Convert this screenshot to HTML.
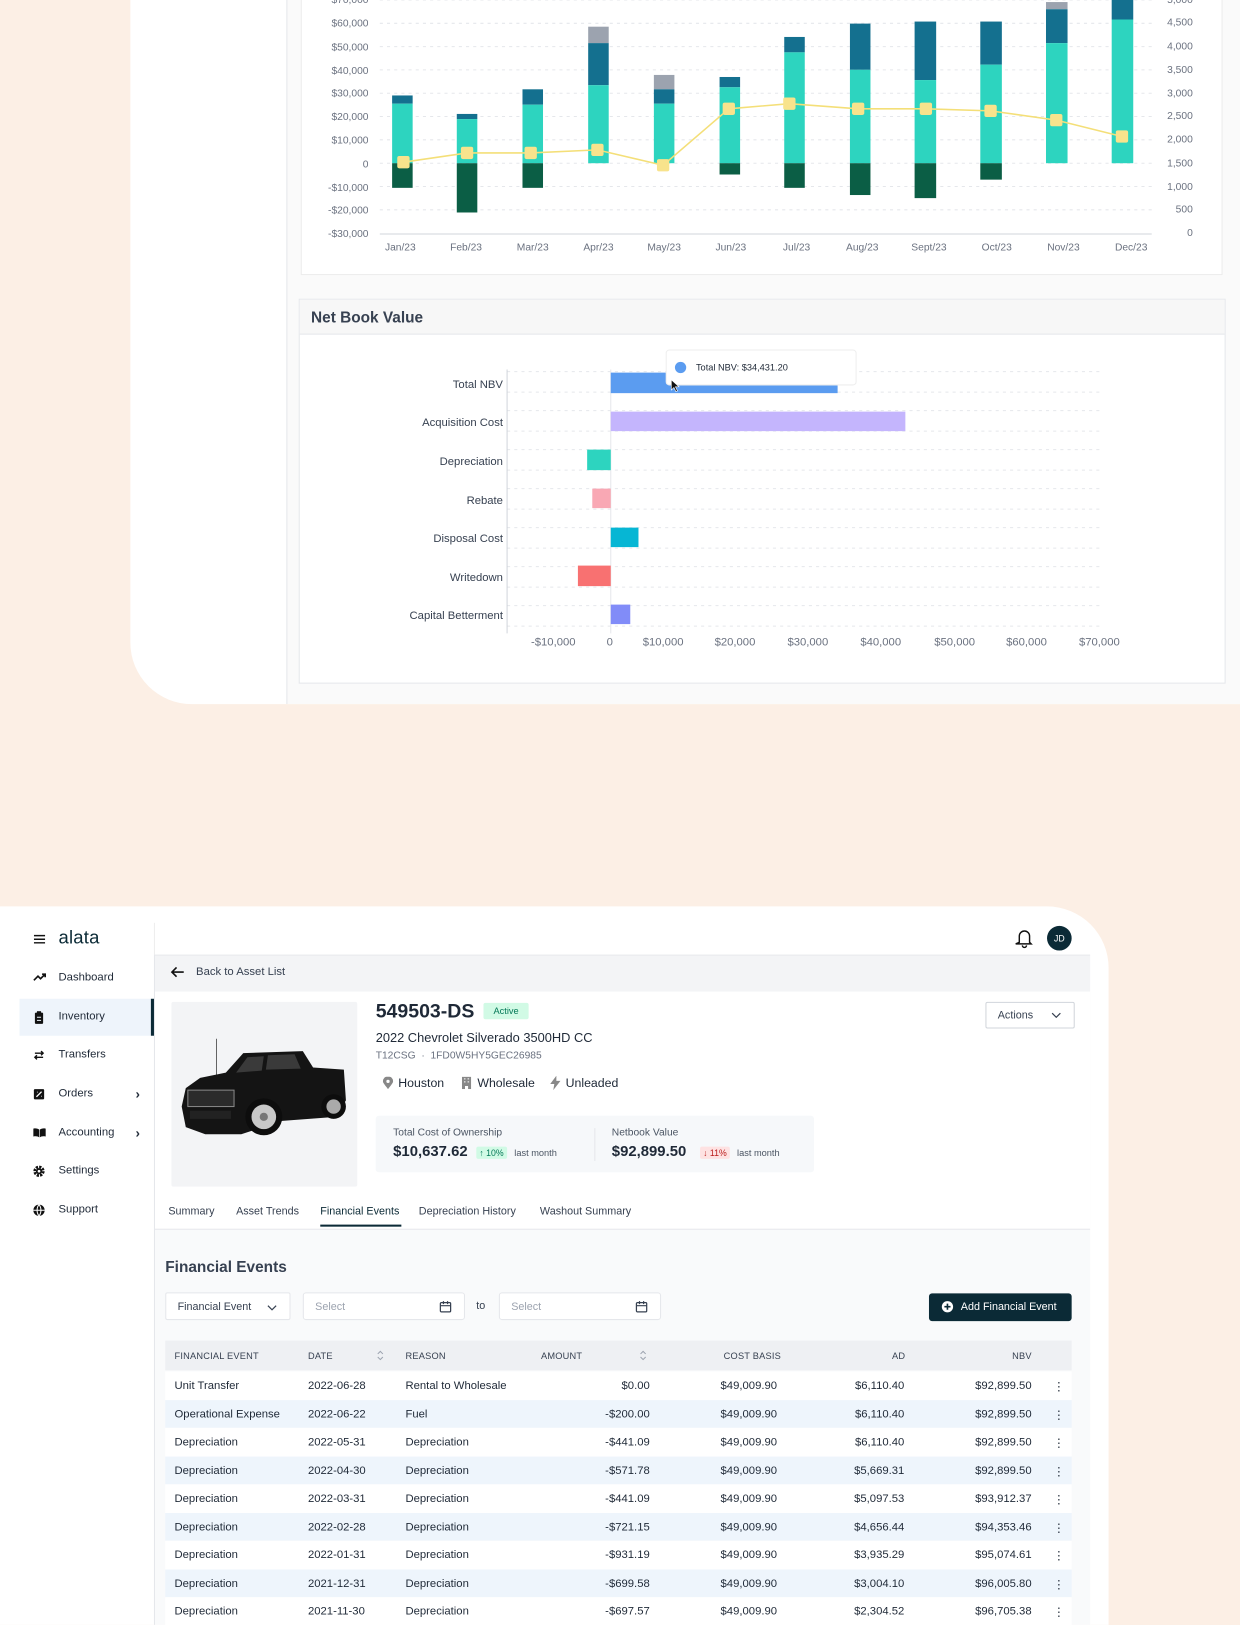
<!DOCTYPE html>
<html><head><meta charset="utf-8">
<style>
*{box-sizing:border-box;margin:0;padding:0}
html,body{width:1240px;height:1610px;overflow:hidden;background:#fcefe5;font-family:"Liberation Sans",sans-serif;color:#1f2937}
#w{position:absolute;left:0;top:0;width:1208px;height:1568px;transform:scale(1.02649);transform-origin:0 0;background:#fcefe5}
.abs{position:absolute}
.ax{font-size:10px;fill:#6b7280;font-family:"Liberation Sans",sans-serif}
.nav{position:absolute;left:19px;width:131px;height:36px;font-size:11px;color:#1f2937}
.nav span{position:absolute;left:38px;top:11px}
.nav svg{position:absolute;left:13px;top:12px}
.nav .chev{position:absolute;left:113px;top:10px;font-size:13px}
.row{position:absolute;left:161px;width:883px;height:27.5px;font-size:11px;color:#1f2937}
.row div{position:absolute;top:8px;white-space:nowrap}
.r{text-align:right}
.hd div{position:absolute;top:10px;font-size:9px;color:#374151;letter-spacing:.2px}
</style></head><body><div id="w">

<!-- TOP PANEL -->
<div class="abs" style="left:127px;top:0;width:1081px;height:686px;background:#fff;border-bottom-left-radius:60px;overflow:hidden">
  <div class="abs" style="left:152px;top:0;width:929px;height:686px;background:#fafafa;border-left:1px solid #e5e7eb"></div>
</div>
<div class="abs" style="left:293px;top:-2px;width:898px;height:270px;background:#fff;border:1px solid #ececec"></div>
<svg class="abs" style="left:0;top:0" width="1208" height="270">
  <g stroke="#e5e7eb" stroke-dasharray="3,4">
    <line x1="370" x2="1122" y1="0" y2="0"/><line x1="370" x2="1122" y1="22.7" y2="22.7"/><line x1="370" x2="1122" y1="45.4" y2="45.4"/><line x1="370" x2="1122" y1="68.1" y2="68.1"/><line x1="370" x2="1122" y1="90.8" y2="90.8"/><line x1="370" x2="1122" y1="113.5" y2="113.5"/><line x1="370" x2="1122" y1="136.2" y2="136.2"/><line x1="370" x2="1122" y1="159" y2="159"/><line x1="370" x2="1122" y1="181.7" y2="181.7"/><line x1="370" x2="1122" y1="204.4" y2="204.4"/>
  </g>
  <line x1="370" x2="1122" y1="228" y2="228" stroke="#d1d5db"/>
  <g class="ax" text-anchor="end">
    <text x="359" y="3">$70,000</text><text x="359" y="26">$60,000</text><text x="359" y="49">$50,000</text><text x="359" y="72">$40,000</text><text x="359" y="94">$30,000</text><text x="359" y="117">$20,000</text><text x="359" y="140">$10,000</text><text x="359" y="163">0</text><text x="359" y="186">-$10,000</text><text x="359" y="208">-$20,000</text><text x="359" y="231">-$30,000</text>
  </g>
  <g class="ax" text-anchor="end">
    <text x="1162" y="3">5,000</text><text x="1162" y="25">4,500</text><text x="1162" y="48">4,000</text><text x="1162" y="71">3,500</text><text x="1162" y="94">3,000</text><text x="1162" y="116">2,500</text><text x="1162" y="139">2,000</text><text x="1162" y="162">1,500</text><text x="1162" y="185">1,000</text><text x="1162" y="207">500</text><text x="1162" y="230">0</text>
  </g>
  <g class="ax" text-anchor="middle">
    <text x="390" y="244">Jan/23</text><text x="454" y="244">Feb/23</text><text x="519" y="244">Mar/23</text><text x="583" y="244">Apr/23</text><text x="647" y="244">May/23</text><text x="712" y="244">Jun/23</text><text x="776" y="244">Jul/23</text><text x="840" y="244">Aug/23</text><text x="905" y="244">Sept/23</text><text x="971" y="244">Oct/23</text><text x="1036" y="244">Nov/23</text><text x="1102" y="244">Dec/23</text>
  </g>
  <g>
    <rect x="382" y="93" width="20" height="8" fill="#14708f"/><rect x="382" y="101" width="20" height="58" fill="#2dd4bf"/><rect x="382" y="159" width="20" height="24" fill="#0b5e45"/>
    <rect x="445" y="111" width="20" height="5" fill="#14708f"/><rect x="445" y="116" width="20" height="43" fill="#2dd4bf"/><rect x="445" y="159" width="20" height="48" fill="#0b5e45"/>
    <rect x="509" y="87" width="20" height="15" fill="#14708f"/><rect x="509" y="102" width="20" height="57" fill="#2dd4bf"/><rect x="509" y="159" width="20" height="24" fill="#0b5e45"/>
    <rect x="573" y="26" width="20" height="16" fill="#9ca3af"/><rect x="573" y="42" width="20" height="41" fill="#14708f"/><rect x="573" y="83" width="20" height="76" fill="#2dd4bf"/>
    <rect x="637" y="73" width="20" height="14" fill="#9ca3af"/><rect x="637" y="87" width="20" height="14" fill="#14708f"/><rect x="637" y="101" width="20" height="58" fill="#2dd4bf"/>
    <rect x="701" y="75" width="20" height="10" fill="#14708f"/><rect x="701" y="85" width="20" height="74" fill="#2dd4bf"/><rect x="701" y="159" width="20" height="11" fill="#0b5e45"/>
    <rect x="764" y="36" width="20" height="15" fill="#14708f"/><rect x="764" y="51" width="20" height="108" fill="#2dd4bf"/><rect x="764" y="159" width="20" height="24" fill="#0b5e45"/>
    <rect x="828" y="23" width="20" height="45" fill="#14708f"/><rect x="828" y="68" width="20" height="91" fill="#2dd4bf"/><rect x="828" y="159" width="20" height="31" fill="#0b5e45"/>
    <rect x="891" y="21" width="21" height="57" fill="#14708f"/><rect x="891" y="78" width="21" height="81" fill="#2dd4bf"/><rect x="891" y="159" width="21" height="34" fill="#0b5e45"/>
    <rect x="955" y="21" width="21" height="42" fill="#14708f"/><rect x="955" y="63" width="21" height="96" fill="#2dd4bf"/><rect x="955" y="159" width="21" height="16" fill="#0b5e45"/>
    <rect x="1019" y="2" width="21" height="7" fill="#9ca3af"/><rect x="1019" y="9" width="21" height="33" fill="#14708f"/><rect x="1019" y="42" width="21" height="117" fill="#2dd4bf"/>
    <rect x="1083" y="0" width="21" height="19" fill="#14708f"/><rect x="1083" y="19" width="21" height="140" fill="#2dd4bf"/>
  </g>
  <polyline fill="none" stroke="#f4df78" stroke-width="1.5" points="393,158 455,149 517,149 582,146 646,161 710,106 769,101 836,106 902,106 965,108 1029,117 1093,133"/>
  <g fill="#f8e38c">
    <rect x="387" y="152" width="12" height="12" rx="2"/><rect x="449" y="143" width="12" height="12" rx="2"/><rect x="511" y="143" width="12" height="12" rx="2"/><rect x="576" y="140" width="12" height="12" rx="2"/><rect x="640" y="155" width="12" height="12" rx="2"/><rect x="704" y="100" width="12" height="12" rx="2"/><rect x="763" y="95" width="12" height="12" rx="2"/><rect x="830" y="100" width="12" height="12" rx="2"/><rect x="896" y="100" width="12" height="12" rx="2"/><rect x="959" y="102" width="12" height="12" rx="2"/><rect x="1023" y="111" width="12" height="12" rx="2"/><rect x="1087" y="127" width="12" height="12" rx="2"/>
  </g>
</svg>

<!-- NBV card -->
<div class="abs" style="left:291px;top:291px;width:903px;height:375px;background:#fff;border:1px solid #e5e7eb">
  <div style="height:34px;background:#f7f7f7;border-bottom:1px solid #e5e7eb;padding:9px 11px;font-size:15px;font-weight:bold;color:#374151">Net Book Value</div>
</div>
<svg class="abs" style="left:0;top:330px" width="1208" height="320">
  <g stroke="#e5e7eb" stroke-dasharray="3,4">
    <line x1="494" x2="1071" y1="32" y2="32"/><line x1="494" x2="1071" y1="52" y2="52"/><line x1="494" x2="1071" y1="70" y2="70"/><line x1="494" x2="1071" y1="90" y2="90"/><line x1="494" x2="1071" y1="108" y2="108"/><line x1="494" x2="1071" y1="128" y2="128"/><line x1="494" x2="1071" y1="146" y2="146"/><line x1="494" x2="1071" y1="166" y2="166"/><line x1="494" x2="1071" y1="184" y2="184"/><line x1="494" x2="1071" y1="204" y2="204"/><line x1="494" x2="1071" y1="222" y2="222"/><line x1="494" x2="1071" y1="242" y2="242"/><line x1="494" x2="1071" y1="260" y2="260"/><line x1="494" x2="1071" y1="280" y2="280"/>
  </g>
  <line x1="494" x2="494" y1="30" y2="287" stroke="#d1d5db"/>
  <line x1="595" x2="595" y1="30" y2="287" stroke="#e5e7eb"/>
  <g font-size="11" fill="#374151" text-anchor="end" font-family="Liberation Sans,sans-serif">
    <text x="490" y="48">Total NBV</text><text x="490" y="85">Acquisition Cost</text><text x="490" y="123">Depreciation</text><text x="490" y="161">Rebate</text><text x="490" y="198">Disposal Cost</text><text x="490" y="236">Writedown</text><text x="490" y="273">Capital Betterment</text>
  </g>
  <rect x="595" y="33" width="221" height="20" fill="#5b9cf0"/>
  <rect x="595" y="71" width="287" height="19" fill="#c4b5fd"/>
  <rect x="572" y="108" width="23" height="20" fill="#2dd4bf"/>
  <rect x="577" y="146" width="18" height="19" fill="#f9a8b4"/>
  <rect x="595" y="184" width="27" height="19" fill="#06b6d4"/>
  <rect x="563" y="221" width="32" height="20" fill="#f87171"/>
  <rect x="595" y="259" width="19" height="19" fill="#818cf8"/>
  <g font-size="11" fill="#6b7280" text-anchor="middle" font-family="Liberation Sans,sans-serif">
    <text x="539" y="299">-$10,000</text><text x="594" y="299">0</text><text x="646" y="299">$10,000</text><text x="716" y="299">$20,000</text><text x="787" y="299">$30,000</text><text x="858" y="299">$40,000</text><text x="930" y="299">$50,000</text><text x="1000" y="299">$60,000</text><text x="1071" y="299">$70,000</text>
  </g>
  <rect x="649" y="11" width="185" height="34" rx="3" fill="#fff" stroke="#eee"/>
  <circle cx="663" cy="28" r="5.5" fill="#5b9cf0"/>
  <text x="678" y="31" font-size="9" fill="#1f2937" font-family="Liberation Sans,sans-serif">Total NBV: $34,431.20</text>
  <path d="M654 40 l0 10 l2.5-2.5 l2 4 l1.5-.7 l-2-4 l3.5 0 z" fill="#111" stroke="#fff" stroke-width=".6"/>
</svg>

<!-- BOTTOM PANEL -->
<div class="abs" style="left:0;top:883px;width:1080px;height:700px;background:#fff;border-top-right-radius:60px;overflow:hidden">
  <div class="abs" style="left:150px;top:47px;width:912px;height:700px;background:#f9fafb;border-left:1px solid #e5e7eb;border-top:1px solid #e5e7eb"></div>
  <div class="abs" style="left:150px;top:16px;width:1px;height:31px;background:#eee"></div>
</div>
<svg class="abs" style="left:33px;top:910px" width="11" height="10" viewBox="0 0 11 10"><path d="M0 1.5h11M0 5h11M0 8.5h11" stroke="#111" stroke-width="1.4"/></svg>
<div class="abs" style="left:57px;top:903px;font-size:18px;color:#0b2a36;letter-spacing:.2px">alata</div>

<div class="nav" style="top:935px"><svg width="13" height="10" viewBox="0 0 13 10"><path d="M1 8 L5 4 L7.5 6.5 L12 2 M9 2 H12 V5" fill="none" stroke="#111" stroke-width="1.6"/></svg><span>Dashboard</span></div>
<div class="nav" style="top:973px;background:#eef4fb;border-right:3px solid #0b2a36"><svg width="12" height="13" viewBox="0 0 12 13"><rect x="2" y="1.5" width="8" height="11" rx="1" fill="#111"/><rect x="4" y="0" width="4" height="3" fill="#111"/><path d="M4 6h4M4 9h4" stroke="#eef4fb" stroke-width="1"/></svg><span>Inventory</span></div>
<div class="nav" style="top:1010px"><svg width="12" height="12" viewBox="0 0 12 12"><path d="M2 4h8M8 2l2 2-2 2M10 8H2M4 6L2 8l2 2" fill="none" stroke="#111" stroke-width="1.4"/></svg><span>Transfers</span></div>
<div class="nav" style="top:1048px"><svg width="12" height="12" viewBox="0 0 12 12"><rect x="1" y="1" width="10" height="10" rx="1" fill="#111"/><path d="M3.5 8.5l5-5M4 4h.5M8 8h.5" stroke="#fff" stroke-width="1.3"/></svg><span>Orders</span><b class="chev">›</b></div>
<div class="nav" style="top:1086px"><svg width="13" height="11" viewBox="0 0 13 11"><path d="M0.5 1.5 C3 1 5 1.5 6.2 2.5 V10 C5 9 3 8.7 0.5 9.2Z M12.5 1.5 C10 1 8 1.5 6.8 2.5 V10 C8 9 10 8.7 12.5 9.2Z" fill="#111"/></svg><span>Accounting</span><b class="chev">›</b></div>
<div class="nav" style="top:1123px"><svg width="12" height="12" viewBox="0 0 12 12"><circle cx="6" cy="6" r="4.2" fill="none" stroke="#111" stroke-width="2.6" stroke-dasharray="2.2 1.1"/><circle cx="6" cy="6" r="3" fill="#111"/><circle cx="6" cy="6" r="1.3" fill="#fff"/></svg><span>Settings</span></div>
<div class="nav" style="top:1161px"><svg width="12" height="12" viewBox="0 0 12 12"><circle cx="6" cy="6" r="5.5" fill="#111"/><path d="M0.5 6h11M6 .5c-2.5 3-2.5 8 0 11M6 .5c2.5 3 2.5 8 0 11" fill="none" stroke="#fff" stroke-width="1"/></svg><span>Support</span></div>

<!-- header icons -->
<svg class="abs" style="left:989px;top:904px" width="18" height="20" viewBox="0 0 18 20"><path d="M4 14V8a5 5 0 0 1 10 0v6l1.5 1.5h-15z M7 17a2 2 0 0 0 4 0" fill="none" stroke="#111" stroke-width="1.4"/></svg>
<div class="abs" style="left:1020px;top:902px;width:24px;height:24px;border-radius:50%;background:#0b2a36;color:#fff;font-size:8.5px;text-align:center;line-height:24px">JD</div>

<!-- back bar -->
<div class="abs" style="left:151px;top:931px;width:911px;height:35px;background:#f3f4f6"></div>
<svg class="abs" style="left:166px;top:941px" width="14" height="12" viewBox="0 0 14 12"><path d="M13 6H2M6 1.5L1.5 6 6 10.5" fill="none" stroke="#111" stroke-width="1.6"/></svg>
<div class="abs" style="left:191px;top:941px;font-size:11px;color:#374151">Back to Asset List</div>

<!-- detail area white -->
<div class="abs" style="left:151px;top:966px;width:911px;height:232px;background:#fff;border-bottom:1px solid #e5e7eb"></div>
<div class="abs" style="left:167px;top:976px;width:181px;height:180px;background:#f3f4f6;border-radius:2px"></div>
<svg class="abs" style="left:175px;top:1010px" width="165" height="110" viewBox="0 0 165 110">
  <line x1="36" y1="2" x2="36" y2="42" stroke="#444" stroke-width="0.8"/>
  <path d="M20 40 L45 35 L62 16 L120 14 L130 30 L160 32 L162 62 L152 78 L100 82 L60 95 L25 95 L6 88 L2 68 L6 50 Z" fill="#141414"/>
  <path d="M66 20 L82 19 L80 33 L55 35 Z M86 18 L112 17 L118 31 L84 32 Z" fill="#3a3a3a"/>
  <rect x="8" y="52" width="45" height="16" fill="#2b2b2b" stroke="#888" stroke-width="1"/>
  <rect x="10" y="72" width="40" height="8" fill="#222"/>
  <circle cx="82" cy="78" r="18" fill="#0d0d0d"/><circle cx="82" cy="78" r="12" fill="#c8c8c8"/><circle cx="82" cy="78" r="4" fill="#777"/>
  <circle cx="150" cy="68" r="12" fill="#0d0d0d"/><circle cx="150" cy="68" r="7" fill="#aaa"/>
</svg>

<div class="abs" style="left:366px;top:975px;font-size:19px;font-weight:bold;color:#1f2937">549503-DS</div>
<div class="abs" style="left:471px;top:977px;width:44px;height:16px;background:#d1fae5;color:#047857;font-size:9px;text-align:center;line-height:16px;border-radius:2px">Active</div>
<div class="abs" style="left:366px;top:1004px;font-size:12.5px;color:#1f2937">2022 Chevrolet Silverado 3500HD CC</div>
<div class="abs" style="left:366px;top:1023px;font-size:10px;color:#6b7280">T12CSG &nbsp;·&nbsp; 1FD0W5HY5GEC26985</div>
<svg class="abs" style="left:373px;top:1049px" width="10" height="12" viewBox="0 0 10 12"><path d="M5 12 C1 7 0 5.5 0 4.5a5 5 0 0 1 10 0c0 1-1 2.5-5 7.5z" fill="#888"/><circle cx="5" cy="4.5" r="1.6" fill="#fff"/></svg>
<div class="abs" style="left:388px;top:1048px;font-size:12px;color:#1f2937">Houston</div>
<svg class="abs" style="left:450px;top:1049px" width="9" height="12" viewBox="0 0 9 12"><path d="M0 0h9v12H6V9H3v3H0z" fill="#888"/><path d="M2 2h1.5M5.5 2H7M2 5h1.5M5.5 5H7" stroke="#fff"/></svg>
<div class="abs" style="left:465px;top:1048px;font-size:12px;color:#1f2937">Wholesale</div>
<svg class="abs" style="left:536px;top:1048px" width="10" height="14" viewBox="0 0 10 14"><path d="M6 0 L0 8 H4 L3 14 L10 5 H6 Z" fill="#888"/></svg>
<div class="abs" style="left:551px;top:1048px;font-size:12px;color:#1f2937">Unleaded</div>

<div class="abs" style="left:366px;top:1087px;width:427px;height:55px;background:#f6f8fa;border-radius:3px"></div>
<div class="abs" style="left:579px;top:1099px;width:1px;height:32px;background:#e5e7eb"></div>
<div class="abs" style="left:383px;top:1098px;font-size:10px;color:#4b5563">Total Cost of Ownership</div>
<div class="abs" style="left:383px;top:1114px;font-size:14.5px;font-weight:bold;color:#1f2937">$10,637.62</div>
<div class="abs" style="left:464px;top:1117px;font-size:8.5px;color:#047857;background:#d1fae5;padding:1px 3px;border-radius:2px">↑ 10%</div>
<div class="abs" style="left:501px;top:1118px;font-size:9px;color:#4b5563">last month</div>
<div class="abs" style="left:596px;top:1098px;font-size:10px;color:#4b5563">Netbook Value</div>
<div class="abs" style="left:596px;top:1114px;font-size:14.5px;font-weight:bold;color:#1f2937">$92,899.50</div>
<div class="abs" style="left:682px;top:1117px;font-size:8.5px;color:#b91c1c;background:#fee2e2;padding:1px 3px;border-radius:2px">↓ 11%</div>
<div class="abs" style="left:718px;top:1118px;font-size:9px;color:#4b5563">last month</div>

<div class="abs" style="left:960px;top:976px;width:87px;height:26px;border:1px solid #d1d5db;border-radius:2px;font-size:10.5px;color:#374151;padding:6px 11px;background:#fff">Actions<svg style="position:absolute;right:12px;top:9px" width="10" height="6" viewBox="0 0 10 6"><path d="M1 1l4 4 4-4" fill="none" stroke="#374151" stroke-width="1.2"/></svg></div>

<div class="abs" style="left:164px;top:1174px;font-size:10.5px;color:#374151;white-space:nowrap">Summary</div>
<div class="abs" style="left:230px;top:1174px;font-size:10.5px;color:#374151">Asset Trends</div>
<div class="abs" style="left:312px;top:1174px;font-size:10.5px;color:#0b2a36">Financial Events</div>
<div class="abs" style="left:312px;top:1193px;width:79px;height:2px;background:#0b2a36"></div>
<div class="abs" style="left:408px;top:1174px;font-size:10.5px;color:#374151">Depreciation History</div>
<div class="abs" style="left:526px;top:1174px;font-size:10.5px;color:#374151">Washout Summary</div>

<div class="abs" style="left:161px;top:1226px;font-size:15px;font-weight:bold;color:#374151">Financial Events</div>
<div class="abs" style="left:161px;top:1259px;width:122px;height:27px;background:#fff;border:1px solid #e5e7eb;border-radius:2px;font-size:10.5px;color:#374151;padding:7px 11px">Financial Event<svg style="position:absolute;right:12px;top:11px" width="10" height="6" viewBox="0 0 10 6"><path d="M1 1l4 4 4-4" fill="none" stroke="#374151" stroke-width="1.2"/></svg></div>
<div class="abs" style="left:295px;top:1259px;width:158px;height:27px;background:#fff;border:1px solid #e5e7eb;border-radius:3px;font-size:10.5px;color:#9ca3af;padding:7px 11px">Select<svg style="position:absolute;right:12px;top:7px" width="12" height="12" viewBox="0 0 12 12"><rect x="1" y="2" width="10" height="9" rx="1" fill="none" stroke="#374151" stroke-width="1.2"/><path d="M1 5h10M4 .5v3M8 .5v3" stroke="#374151" stroke-width="1.2"/></svg></div>
<div class="abs" style="left:464px;top:1266px;font-size:10.5px;color:#374151">to</div>
<div class="abs" style="left:486px;top:1259px;width:158px;height:27px;background:#fff;border:1px solid #e5e7eb;border-radius:3px;font-size:10.5px;color:#9ca3af;padding:7px 11px">Select<svg style="position:absolute;right:12px;top:7px" width="12" height="12" viewBox="0 0 12 12"><rect x="1" y="2" width="10" height="9" rx="1" fill="none" stroke="#374151" stroke-width="1.2"/><path d="M1 5h10M4 .5v3M8 .5v3" stroke="#374151" stroke-width="1.2"/></svg></div>
<div class="abs" style="left:905px;top:1260px;width:139px;height:27px;background:#0b2a36;border-radius:3px;color:#fff;font-size:10.5px;padding:7px 0 0 31px">Add Financial Event<svg style="position:absolute;left:12px;top:7px" width="12" height="12" viewBox="0 0 12 12"><circle cx="6" cy="6" r="5.5" fill="#fff"/><path d="M6 3v6M3 6h6" stroke="#0b2a36" stroke-width="1.6"/></svg></div>

<!-- table -->
<div class="row hd" style="top:1306px;height:29px;background:#eef0f3">
  <div style="left:9px">FINANCIAL EVENT</div><div style="left:139px">DATE</div><div style="left:206px;top:9px"><svg width="7" height="11" viewBox="0 0 7 11"><path d="M1 4l2.5-2.5L6 4M1 7l2.5 2.5L6 7" fill="none" stroke="#9ca3af" stroke-width="1"/></svg></div><div style="left:234px">REASON</div><div style="left:366px">AMOUNT</div><div style="left:462px;top:9px"><svg width="7" height="11" viewBox="0 0 7 11"><path d="M1 4l2.5-2.5L6 4M1 7l2.5 2.5L6 7" fill="none" stroke="#9ca3af" stroke-width="1"/></svg></div>
  <div style="left:544px">COST BASIS</div><div style="left:708px">AD</div><div style="left:825px">NBV</div>
</div>
<div class="row" style="top:1336px;background:#fff"><div style="left:9px">Unit Transfer</div><div style="left:139px">2022-06-28</div><div style="left:234px">Rental to Wholesale</div><div class="r" style="right:411px">$0.00</div><div class="r" style="right:287px">$49,009.90</div><div class="r" style="right:163px">$6,110.40</div><div class="r" style="right:39px">$92,899.50</div><div style="left:865px">⋮</div></div>
<div class="row" style="top:1363.5px;background:#eef5fc"><div style="left:9px">Operational Expense</div><div style="left:139px">2022-06-22</div><div style="left:234px">Fuel</div><div class="r" style="right:411px">-$200.00</div><div class="r" style="right:287px">$49,009.90</div><div class="r" style="right:163px">$6,110.40</div><div class="r" style="right:39px">$92,899.50</div><div style="left:865px">⋮</div></div>
<div class="row" style="top:1391px;background:#fff"><div style="left:9px">Depreciation</div><div style="left:139px">2022-05-31</div><div style="left:234px">Depreciation</div><div class="r" style="right:411px">-$441.09</div><div class="r" style="right:287px">$49,009.90</div><div class="r" style="right:163px">$6,110.40</div><div class="r" style="right:39px">$92,899.50</div><div style="left:865px">⋮</div></div>
<div class="row" style="top:1418.5px;background:#eef5fc"><div style="left:9px">Depreciation</div><div style="left:139px">2022-04-30</div><div style="left:234px">Depreciation</div><div class="r" style="right:411px">-$571.78</div><div class="r" style="right:287px">$49,009.90</div><div class="r" style="right:163px">$5,669.31</div><div class="r" style="right:39px">$92,899.50</div><div style="left:865px">⋮</div></div>
<div class="row" style="top:1446px;background:#fff"><div style="left:9px">Depreciation</div><div style="left:139px">2022-03-31</div><div style="left:234px">Depreciation</div><div class="r" style="right:411px">-$441.09</div><div class="r" style="right:287px">$49,009.90</div><div class="r" style="right:163px">$5,097.53</div><div class="r" style="right:39px">$93,912.37</div><div style="left:865px">⋮</div></div>
<div class="row" style="top:1473.5px;background:#eef5fc"><div style="left:9px">Depreciation</div><div style="left:139px">2022-02-28</div><div style="left:234px">Depreciation</div><div class="r" style="right:411px">-$721.15</div><div class="r" style="right:287px">$49,009.90</div><div class="r" style="right:163px">$4,656.44</div><div class="r" style="right:39px">$94,353.46</div><div style="left:865px">⋮</div></div>
<div class="row" style="top:1501px;background:#fff"><div style="left:9px">Depreciation</div><div style="left:139px">2022-01-31</div><div style="left:234px">Depreciation</div><div class="r" style="right:411px">-$931.19</div><div class="r" style="right:287px">$49,009.90</div><div class="r" style="right:163px">$3,935.29</div><div class="r" style="right:39px">$95,074.61</div><div style="left:865px">⋮</div></div>
<div class="row" style="top:1528.5px;background:#eef5fc"><div style="left:9px">Depreciation</div><div style="left:139px">2021-12-31</div><div style="left:234px">Depreciation</div><div class="r" style="right:411px">-$699.58</div><div class="r" style="right:287px">$49,009.90</div><div class="r" style="right:163px">$3,004.10</div><div class="r" style="right:39px">$96,005.80</div><div style="left:865px">⋮</div></div>
<div class="row" style="top:1556px;background:#fff"><div style="left:9px">Depreciation</div><div style="left:139px">2021-11-30</div><div style="left:234px">Depreciation</div><div class="r" style="right:411px">-$697.57</div><div class="r" style="right:287px">$49,009.90</div><div class="r" style="right:163px">$2,304.52</div><div class="r" style="right:39px">$96,705.38</div><div style="left:865px">⋮</div></div>

</div></body></html>
